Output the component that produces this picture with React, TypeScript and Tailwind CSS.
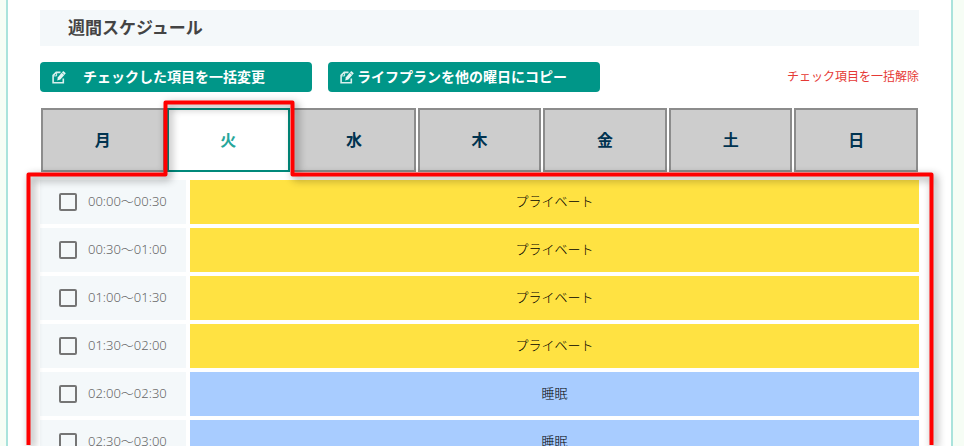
import { useState } from 'react';
import clsx from 'clsx';

const days = ['月', '火', '水', '木', '金', '土', '日'];

const rows = [
  { time: '00:00～00:30', plan: 'プライベート', type: 'private' },
  { time: '00:30～01:00', plan: 'プライベート', type: 'private' },
  { time: '01:00～01:30', plan: 'プライベート', type: 'private' },
  { time: '01:30～02:00', plan: 'プライベート', type: 'private' },
  { time: '02:00～02:30', plan: '睡眠', type: 'sleep' },
  { time: '02:30～03:00', plan: '睡眠', type: 'sleep' },
];

function EditIcon() {
  return (
    <svg width="14" height="14" viewBox="0 0 14 14" fill="none" className="shrink-0" aria-hidden="true">
      <path d="M8.5 2.4H4.2L1.1 5.4v7.3h10.2V8.4" stroke="#d9f0ed" strokeWidth="1.6" />
      <path d="M1 5.9h3.6V2.2" stroke="#d9f0ed" strokeWidth="1" />
      <path d="M5.2 10.4l.7-3.2L11.2 1l2.6 2.2-5.4 6.3-3.2.9z" fill="#e6f6f4" />
      <path d="M9.7 2.6l2.6 2.2" stroke="#009688" strokeWidth=".6" />
    </svg>
  );
}

// red guide line around the selected day and its time table
function Highlight() {
  return (
    <svg
      className="pointer-events-none absolute left-0 top-0 overflow-visible"
      width="964"
      height="446"
      fill="none"
      aria-hidden="true"
    >
      <path
        className="drop-shadow-[3px_3px_4px_rgba(0,0,0,0.45)]"
        d="M28.5 445V174.5H165.5V102.5H292.5V174.5H931.5V445"
        stroke="#ff0000"
        strokeWidth="4"
        strokeLinejoin="round"
      />
    </svg>
  );
}

export default function App() {
  const [day, setDay] = useState('火');

  return (
    <main className="relative h-screen overflow-hidden bg-[#f6fdf5] pl-[6px] pr-[11px] font-['Noto_Sans','Noto_Sans_CJK_JP',sans-serif]">
      <section className="border-x-2 border-[#aae3dc] bg-white px-8 pt-[10px]">
        <h1 className="h-9 bg-[#f4f8fa] px-7 text-[17px] font-bold leading-9 text-[#444]">週間スケジュール</h1>

        <div className="mt-4 flex items-center gap-4">
          <button type="button" className="flex h-[30px] w-[272px] items-center gap-[17px] rounded bg-[#009688] px-3 text-sm font-bold text-white">
            <EditIcon />
            チェックした項目を一括変更
          </button>
          <button type="button" className="flex h-[30px] w-[272px] items-center gap-[3px] rounded bg-[#009688] px-3 text-sm font-bold text-white">
            <EditIcon />
            ライフプランを他の曜日にコピー
          </button>
          <a href="#clear" className="ml-auto text-xs text-[#e53935]">チェック項目を一括解除</a>
        </div>

        <div role="tablist" className="mt-4 grid grid-cols-7 gap-[2px] px-px">
          {days.map((d) => (
            <button
              key={d}
              type="button"
              role="tab"
              aria-selected={d === day}
              onClick={() => setDay(d)}
              className={clsx(
                'h-16 border-2 text-base font-bold',
                d === day ? 'border-[#00897b] bg-white text-[#26a69a]' : 'border-[#8c8c8c] bg-[#cdcdcd] text-[#003350]'
              )}
            >
              {d}
            </button>
          ))}
        </div>

        <div className="mt-2 flex flex-col gap-1">
          {rows.map((row) => (
            <div key={row.time} className="flex h-11 gap-1 text-[13px] font-light">
              <label className="flex w-[146px] items-center gap-[11px] bg-[#f4f8fa] pl-[19px] text-[#666]">
                <input type="checkbox" className="size-[18px] appearance-none rounded-[2px] border-2 border-[#757575] checked:bg-[#009688]" />
                {row.time}
              </label>
              <div
                className={clsx(
                  'flex flex-1 items-center justify-center text-black',
                  row.type === 'private' ? 'bg-[#ffe242]' : 'bg-[#a8ccff]'
                )}
              >
                {row.plan}
              </div>
            </div>
          ))}
        </div>
      </section>
      <Highlight />
    </main>
  );
}
